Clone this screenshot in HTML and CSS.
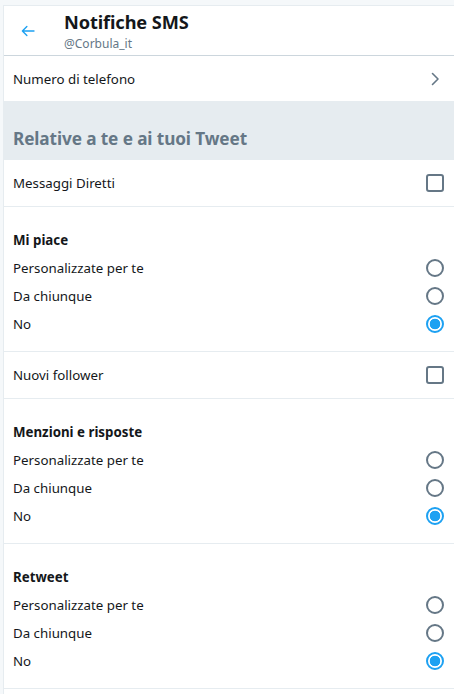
FILE: index.html
```html
<!DOCTYPE html>
<html lang="it">
<head>
<meta charset="utf-8">
<title>Notifiche SMS</title>
<link rel="stylesheet" href="styles.css">
</head>
<body>
<div class="page">
  <header class="header">
    <div class="back">
      <svg viewBox="0 0 24 24" width="18" height="18"><path d="M20 12H4.5M10.5 6l-6 6 6 6" fill="none" stroke="#1da1f2" stroke-width="1.8" stroke-linecap="round" stroke-linejoin="round"/></svg>
    </div>
    <div class="titles">
      <div class="title">Notifiche SMS</div>
      <div class="handle">@Corbula_it</div>
    </div>
  </header>

  <div class="row link">
    <span>Numero di telefono</span>
    <svg viewBox="0 0 10 16" width="10" height="16"><path d="M2.5 2.5l5.5 5.5-5.5 5.5" fill="none" stroke="#657786" stroke-width="1.6" stroke-linecap="round" stroke-linejoin="round"/></svg>
  </div>

  <div class="section">Relative a te e ai tuoi Tweet</div>

  <div class="row check">
    <span>Messaggi Diretti</span>
    <span class="box"></span>
  </div>

  <div class="group">
    <div class="gtitle">Mi piace</div>
    <div class="opt"><span>Personalizzate per te</span><span class="radio"></span></div>
    <div class="opt"><span>Da chiunque</span><span class="radio"></span></div>
    <div class="opt"><span>No</span><span class="radio on"></span></div>
  </div>

  <div class="row check">
    <span>Nuovi follower</span>
    <span class="box"></span>
  </div>

  <div class="group">
    <div class="gtitle">Menzioni e risposte</div>
    <div class="opt"><span>Personalizzate per te</span><span class="radio"></span></div>
    <div class="opt"><span>Da chiunque</span><span class="radio"></span></div>
    <div class="opt"><span>No</span><span class="radio on"></span></div>
  </div>

  <div class="group">
    <div class="gtitle">Retweet</div>
    <div class="opt"><span>Personalizzate per te</span><span class="radio"></span></div>
    <div class="opt"><span>Da chiunque</span><span class="radio"></span></div>
    <div class="opt"><span>No</span><span class="radio on"></span></div>
  </div>
</div>
</body>
</html>
```

FILE: styles.css
```css
html, body {
  margin: 0;
  padding: 0;
}
body {
  background: #f5f8fa;
  padding: 5px 0 0 3px;
  font-family: "Noto Sans", "Open Sans", sans-serif;
  color: #14171a;
  font-size: 13.3px;
  overflow: hidden;
  height: 694px;
  box-sizing: border-box;
}
.page {
  background: #fff;
  border-top: 1px solid #e6ecf0;
  border-left: 1px solid #e6ecf0;
  min-height: 700px;
}
.header {
  display: flex;
  align-items: flex-start;
  height: 49px;
  border-bottom: 1px solid #ccd6dd;
}
.back {
  width: 60px;
  display: flex;
  padding-left: 15px;
  padding-top: 16px;
  box-sizing: border-box;
}
.titles {
  display: flex;
  flex-direction: column;
  padding-top: 4px;
}
.title {
  font-weight: 700;
  font-size: 18.2px;
  line-height: 24px;
  letter-spacing: -0.1px;
}
.handle {
  font-size: 12px;
  color: #657786;
  line-height: 18px;
  margin-top: 1px;
}
.row {
  display: flex;
  align-items: center;
  justify-content: space-between;
  padding: 0 10px 0 9px;
}
.row.link {
  height: 45px;
  padding-right: 14px;
}
.section {
  background: #e6ecf0;
  height: 59px;
  box-sizing: border-box;
  padding: 25px 9px 0;
  font-size: 17.2px;
  font-weight: 700;
  color: #657786;
  line-height: 26px;
  letter-spacing: -0.1px;
}
.row.check {
  height: 46px;
  border-bottom: 1px solid #e6ecf0;
}
.box {
  width: 14px;
  height: 14px;
  border: 2px solid #657786;
  border-radius: 3px;
}
.group {
  padding: 19px 10px 13px 9px;
  border-bottom: 1px solid #e6ecf0;
}
.gtitle {
  height: 28px;
  line-height: 28px;
  font-weight: 700;
}
.opt {
  height: 28px;
  display: flex;
  align-items: center;
  justify-content: space-between;
}
.radio {
  width: 14px;
  height: 14px;
  border: 2px solid #657786;
  border-radius: 50%;
  background: #fff;
}
.radio.on {
  border-color: #1da1f2;
  background: radial-gradient(circle, #1da1f2 0 5px, #fff 5.6px);
}
```
